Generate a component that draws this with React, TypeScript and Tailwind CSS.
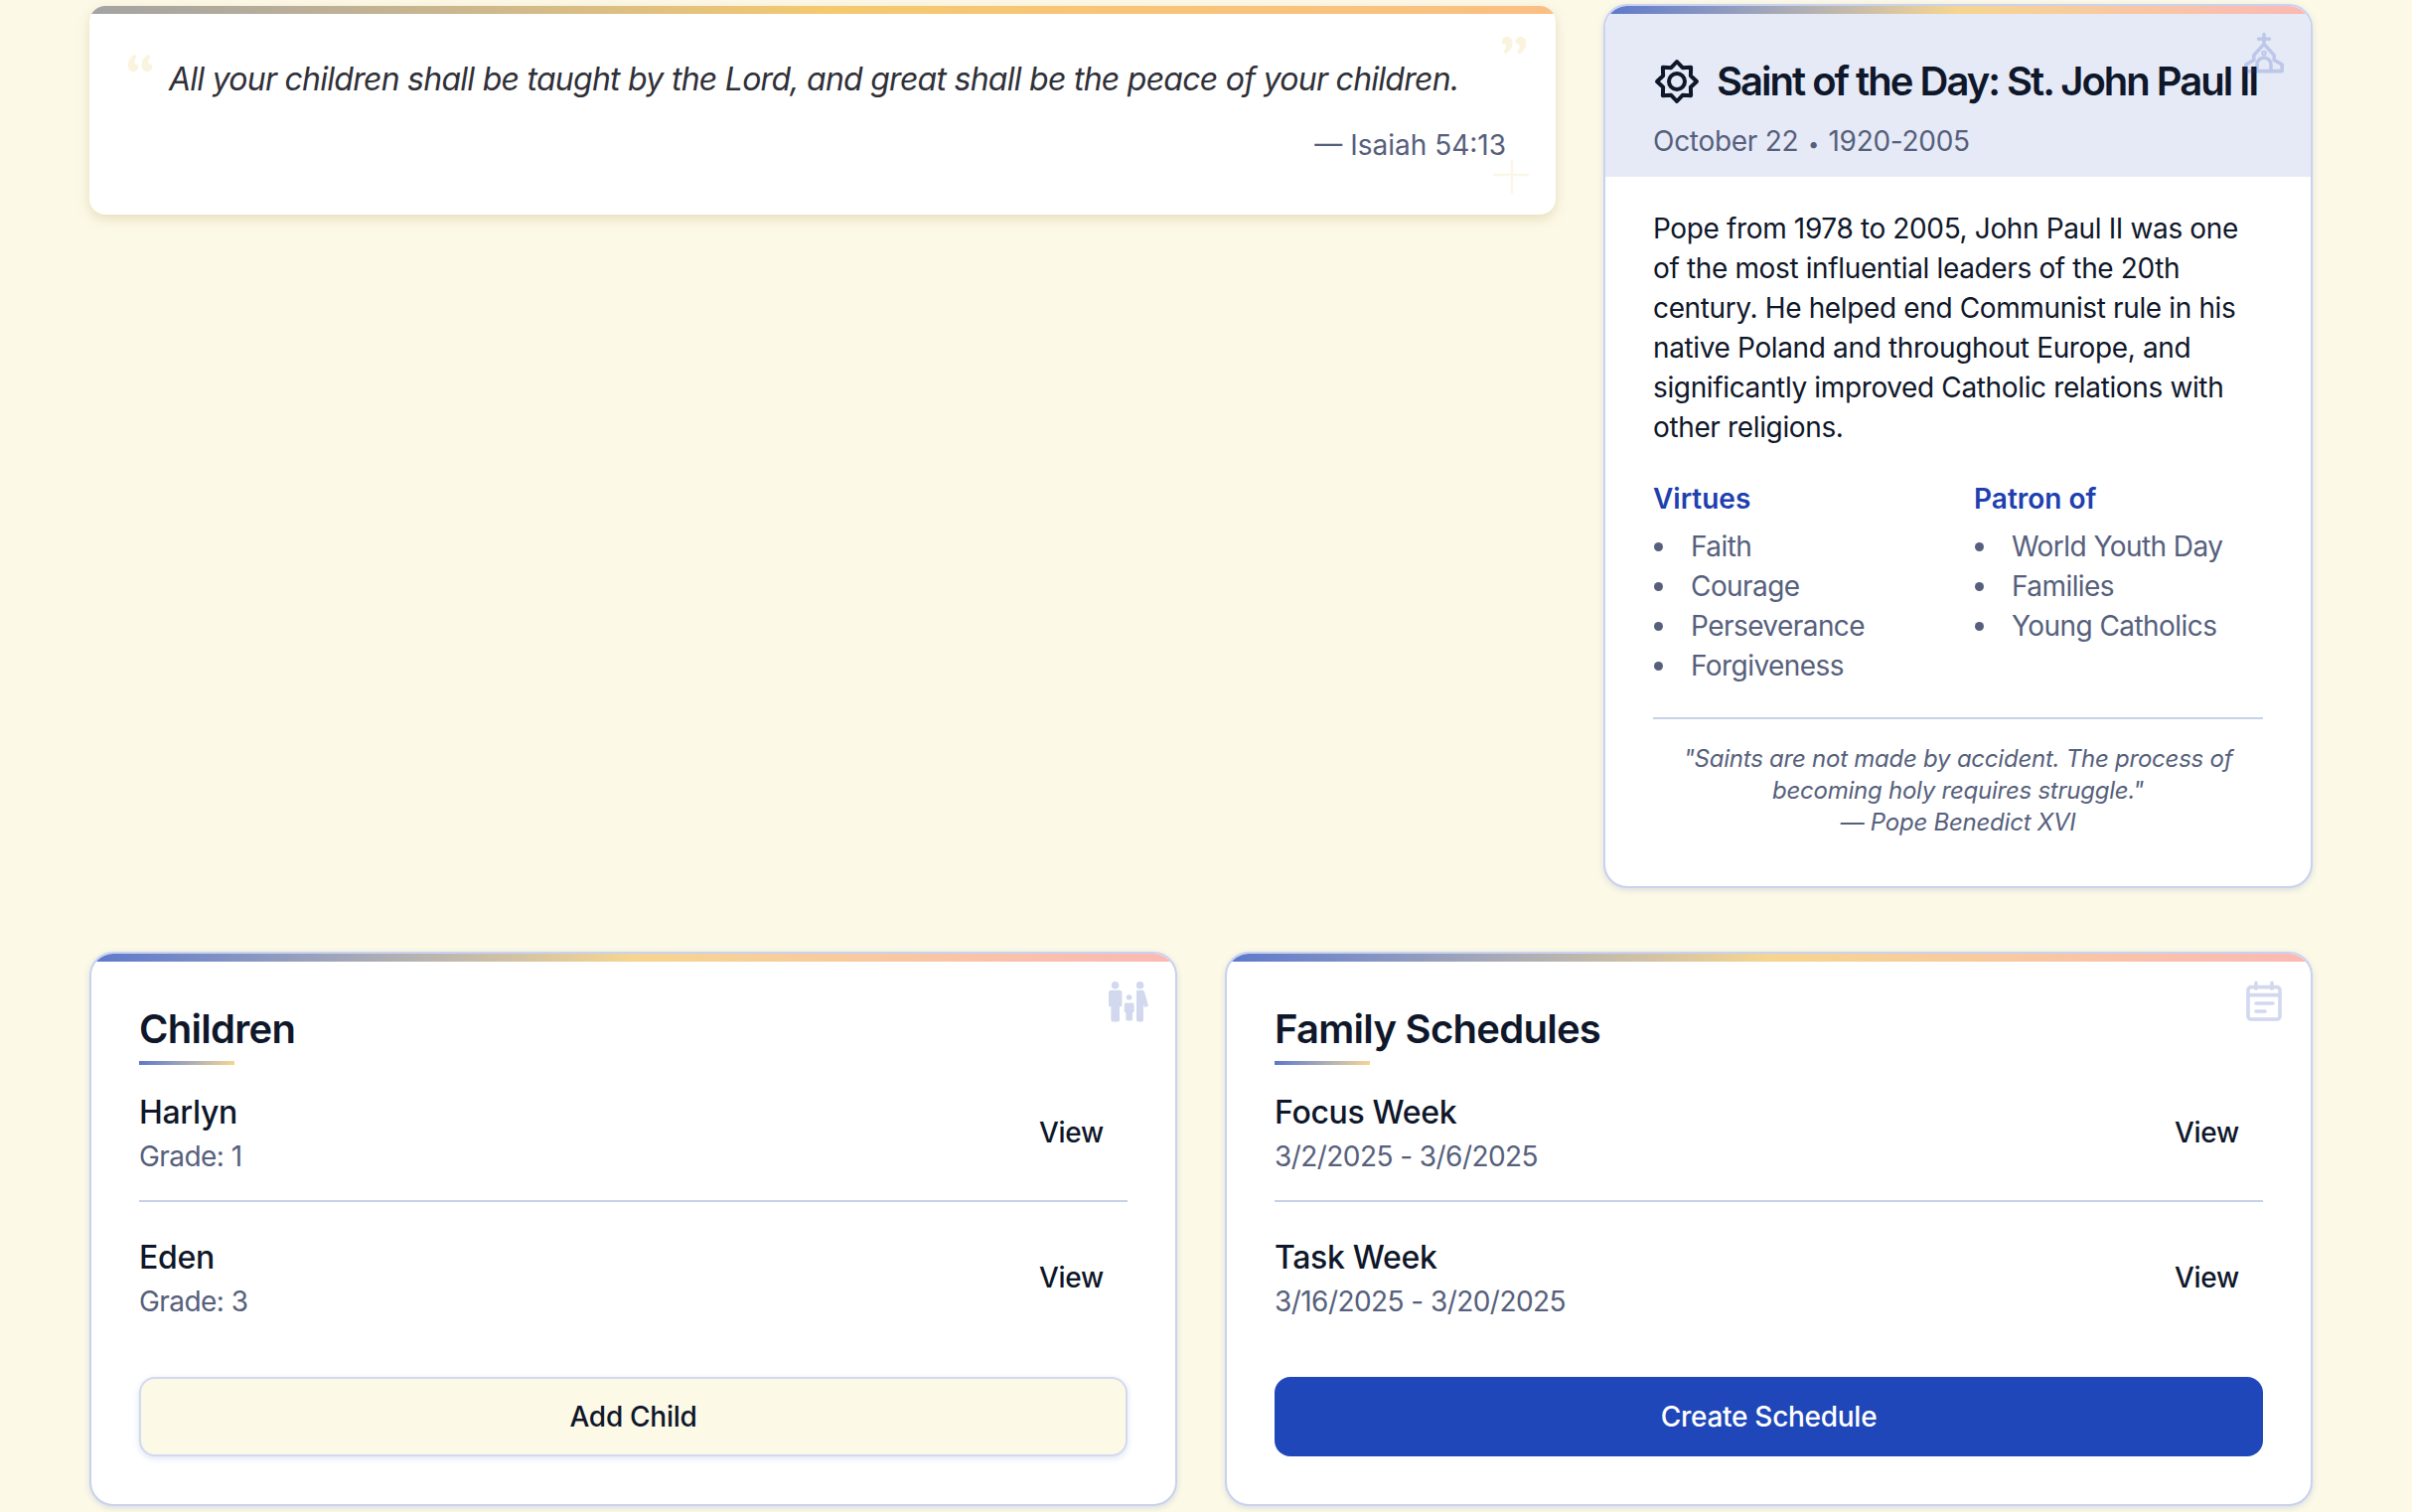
import React from "react";

const FONT = "[font-family:Inter,'Noto_Sans',sans-serif]";

function TopBar({ quiet }: { quiet?: boolean }) {
  return (
    <div
      className={
        quiet
          ? "absolute inset-x-0 top-0 h-1 bg-gradient-to-r from-[#a3a3a3] via-[#f4c96f] to-[#fbbf83]"
          : "absolute inset-x-0 top-0 h-1 bg-gradient-to-r from-[#5d78cc] via-[#f6d58f] to-[#fbb8b4]"
      }
    />
  );
}

function BadgeIcon() {
  return (
    <svg viewBox="0 0 24 24" fill="none" stroke="currentColor" strokeWidth="2" strokeLinecap="round" strokeLinejoin="round" className="h-6 w-6 shrink-0">
      <path d="M12 2L14.87 5.07L19.07 4.93L18.93 9.13L22 12L18.93 14.87L19.07 19.07L14.87 18.93L12 22L9.13 18.93L4.93 19.07L5.07 14.87L2 12L5.07 9.13L4.93 4.93L9.13 5.07Z" />
      <circle cx="12" cy="12" r="4" />
    </svg>
  );
}

function ChurchIcon() {
  return (
    <svg viewBox="0 0 24 24" fill="none" stroke="currentColor" strokeWidth="1.8" strokeLinecap="round" strokeLinejoin="round" className="absolute right-3 top-3 h-6 w-6 text-[#1e40af] opacity-20">
      <path d="M12.5 2.3v5M9.8 4.6h5.4" />
      <path d="M3.4 20.8v-3.3l4-2.3v-2.4l5.1-5.6 5.1 5.6v2.4l4 2.3v3.3z" />
      <path d="M9 20.8v-3.3a3.5 3.5 0 0 1 7 0v3.3" />
      <circle cx="12.5" cy="11.8" r="0.5" />
    </svg>
  );
}

function FamilyIcon() {
  return (
    <svg viewBox="0 0 24 24" fill="currentColor" className="absolute right-3 top-3 h-6 w-6 text-[#1e40af] opacity-20">
      <circle cx="5.8" cy="3.9" r="1.9" />
      <path d="M3.8 6.4h4.1a1.3 1.3 0 0 1 1.3 1.3v6.6l-1.2.6v6.3a1 1 0 0 1-1 1H4.7a1 1 0 0 1-1-1v-6.3l-1.2-.6V7.7a1.3 1.3 0 0 1 1.3-1.3z" />
      <circle cx="12.8" cy="10" r="1.4" />
      <path d="M11.3 12.7h3a1 1 0 0 1 1 1v3.5l-.8.5v3.3a.7.7 0 0 1-.7.7h-1.9a.7.7 0 0 1-.7-.7v-3.3l-.8-.5v-3.5a1 1 0 0 1 1-1z" />
      <circle cx="18.3" cy="3.9" r="1.9" />
      <path d="M17.2 6.4h2.2c.6 0 1 .4 1.2 1l1.9 7-1.8.6-.7-1.6v7.8a1 1 0 0 1-1 1h-1.5a1 1 0 0 1-1-1V7.6c0-.7.0-1.2.7-1.2z" />
    </svg>
  );
}

function ScheduleIcon() {
  return (
    <svg viewBox="0 0 24 24" fill="none" stroke="currentColor" strokeWidth="1.8" strokeLinecap="round" strokeLinejoin="round" className="absolute right-3 top-3 h-6 w-6 text-[#1e40af] opacity-20">
      <rect x="4.5" y="4.8" width="16" height="16.2" rx="1.5" />
      <path d="M8.5 2.6v3M16.5 2.6v3M4.5 8.8h16M8.5 13h8.5M8.5 17h4.5" />
    </svg>
  );
}

function SectionTitle({ children }: { children: React.ReactNode }) {
  return (
    <h2 className="relative text-xl font-semibold tracking-[-0.018em] text-[#0f172a]">
      {children}
      <span className="absolute -bottom-1 left-0 h-0.5 w-12 bg-gradient-to-r from-[#5d78cc] to-[#f6d58f]" />
    </h2>
  );
}

function Row({ title, sub, last }: { title: string; sub: string; last?: boolean }) {
  return (
    <div className={last ? "flex items-center justify-between py-3" : "flex items-center justify-between border-b border-[#c7d2e6] py-3"}>
      <div>
        <p className="text-base font-medium tracking-[-0.01em] text-[#0f172a]">{title}</p>
        <p className="text-sm tracking-[-0.02em] text-[#56607c]">{sub}</p>
      </div>
      <button className="h-9 rounded-md px-3 text-sm font-medium tracking-[-0.01em] text-[#0f172a]">View</button>
    </div>
  );
}

function ListCard({
  title,
  icon,
  rows,
  action,
  primary,
}: {
  title: string;
  icon: React.ReactNode;
  rows: { title: string; sub: string }[];
  action: string;
  primary?: boolean;
}) {
  return (
    <div className="relative overflow-hidden rounded-xl border border-[#c9d2ee] bg-white p-6 shadow-[0_1px_3px_rgba(30,64,175,0.15)]">
      <TopBar />
      {icon}
      <SectionTitle>{title}</SectionTitle>
      <div className="mt-1 space-y-1">
        {rows.map((row, i) => (
          <Row key={row.title} title={row.title} sub={row.sub} last={i === rows.length - 1} />
        ))}
      </div>
      <button
        className={
          primary
            ? "mt-4 h-10 w-full rounded-lg bg-[#2047b9] text-sm font-medium tracking-[-0.01em] text-white"
            : "mt-4 h-10 w-full rounded-lg border border-[#d3d9ef] bg-[#fcf9e7] text-sm font-medium tracking-[-0.01em] text-[#0f172a] shadow-[0_1px_3px_rgba(30,64,175,0.15)]"
        }
      >
        {action}
      </button>
    </div>
  );
}

function Bullets({ items }: { items: string[] }) {
  return (
    <ul className="list-disc pl-[13px] text-sm tracking-[-0.02em] text-[#56607c] marker:text-[#56607c]">
      {items.map((item) => (
        <li key={item} className="pl-1.5">
          {item}
        </li>
      ))}
    </ul>
  );
}

export default function App() {
  return (
    <div className={`${FONT} [zoom:2] min-h-[761px] bg-[#fcf9e7] pl-[45px] pr-[50px] pt-[2px]`}>
      <div className="grid grid-cols-3 items-start gap-6">
        <div className="relative col-span-2 mt-px overflow-hidden rounded-lg bg-white px-6 pb-[25px] pt-[25px] shadow-[0_2px_6px_rgba(190,170,110,0.35)]">
          <TopBar quiet />
          <span className="absolute left-[17.5px] top-[19px] font-serif text-[42px] leading-10 text-[#faf3de]">“</span>
          <span className="absolute right-[13px] top-[10px] font-serif text-[42px] leading-10 text-[#faf3de]">”</span>
          <p className="pl-4 text-base italic tracking-[-0.023em] text-[#2f3038]">
            All your children shall be taught by the Lord, and great shall be the peace of your children.
          </p>
          <p className="mt-[11px] pr-px text-right text-sm text-[#56607c]">— Isaiah 54:13</p>
          <svg viewBox="0 0 24 24" fill="none" stroke="#fbf6e6" strokeWidth="1.2" className="absolute bottom-[7px] right-[11px] h-6 w-6">
            <path d="M13 3.5v17M3.5 11h18" />
          </svg>
        </div>

        <div className="relative overflow-hidden rounded-xl border border-[#c9d2ee] bg-white shadow-[0_1px_3px_rgba(30,64,175,0.15)]">
          <TopBar />
          <ChurchIcon />
          <div className="bg-[#e6eaf7] px-6 pb-2 pt-6">
            <div className="flex items-center gap-2 text-[#0f172a]">
              <BadgeIcon />
              <h2 className="whitespace-nowrap text-xl font-semibold tracking-[-1px]">Saint of the Day: St. John Paul II</h2>
            </div>
            <p className="mt-1.5 text-sm tracking-[-0.01em] text-[#56607c]">
              October 22 <span className="px-px text-[10px]">•</span> 1920-2005
            </p>
          </div>
          <div className="px-6 pb-6 pt-4">
            <p className="pr-2 text-sm tracking-[-0.013em] text-[#0f172a]">
              Pope from 1978 to 2005, John Paul II was one of the most influential leaders of the 20th century. He helped end Communist rule in his native Poland and throughout Europe, and significantly improved Catholic relations with other religions.
            </p>
            <div className="mt-4 grid grid-cols-2 gap-4">
              <div>
                <h3 className="mb-1 text-sm font-semibold text-[#1e40af]">Virtues</h3>
                <Bullets items={["Faith", "Courage", "Perseverance", "Forgiveness"]} />
              </div>
              <div>
                <h3 className="mb-1 text-sm font-semibold text-[#1e40af]">Patron of</h3>
                <Bullets items={["World Youth Day", "Families", "Young Catholics"]} />
              </div>
            </div>
            <div className="mt-4 border-t border-[#c7d2e6] pt-3 text-center text-xs leading-[16px] tracking-[-0.01em] italic text-[#56607c]">
              "Saints are not made by accident. The process of becoming holy requires struggle."
              <br />— Pope Benedict XVI
            </div>
          </div>
        </div>
      </div>

      <div className="mt-8 grid grid-cols-2 gap-6">
        <ListCard
          title="Children"
          icon={<FamilyIcon />}
          rows={[
            { title: "Harlyn", sub: "Grade: 1" },
            { title: "Eden", sub: "Grade: 3" },
          ]}
          action="Add Child"
        />
        <ListCard
          title="Family Schedules"
          icon={<ScheduleIcon />}
          rows={[
            { title: "Focus Week", sub: "3/2/2025 - 3/6/2025" },
            { title: "Task Week", sub: "3/16/2025 - 3/20/2025" },
          ]}
          action="Create Schedule"
          primary
        />
      </div>
    </div>
  );
}
